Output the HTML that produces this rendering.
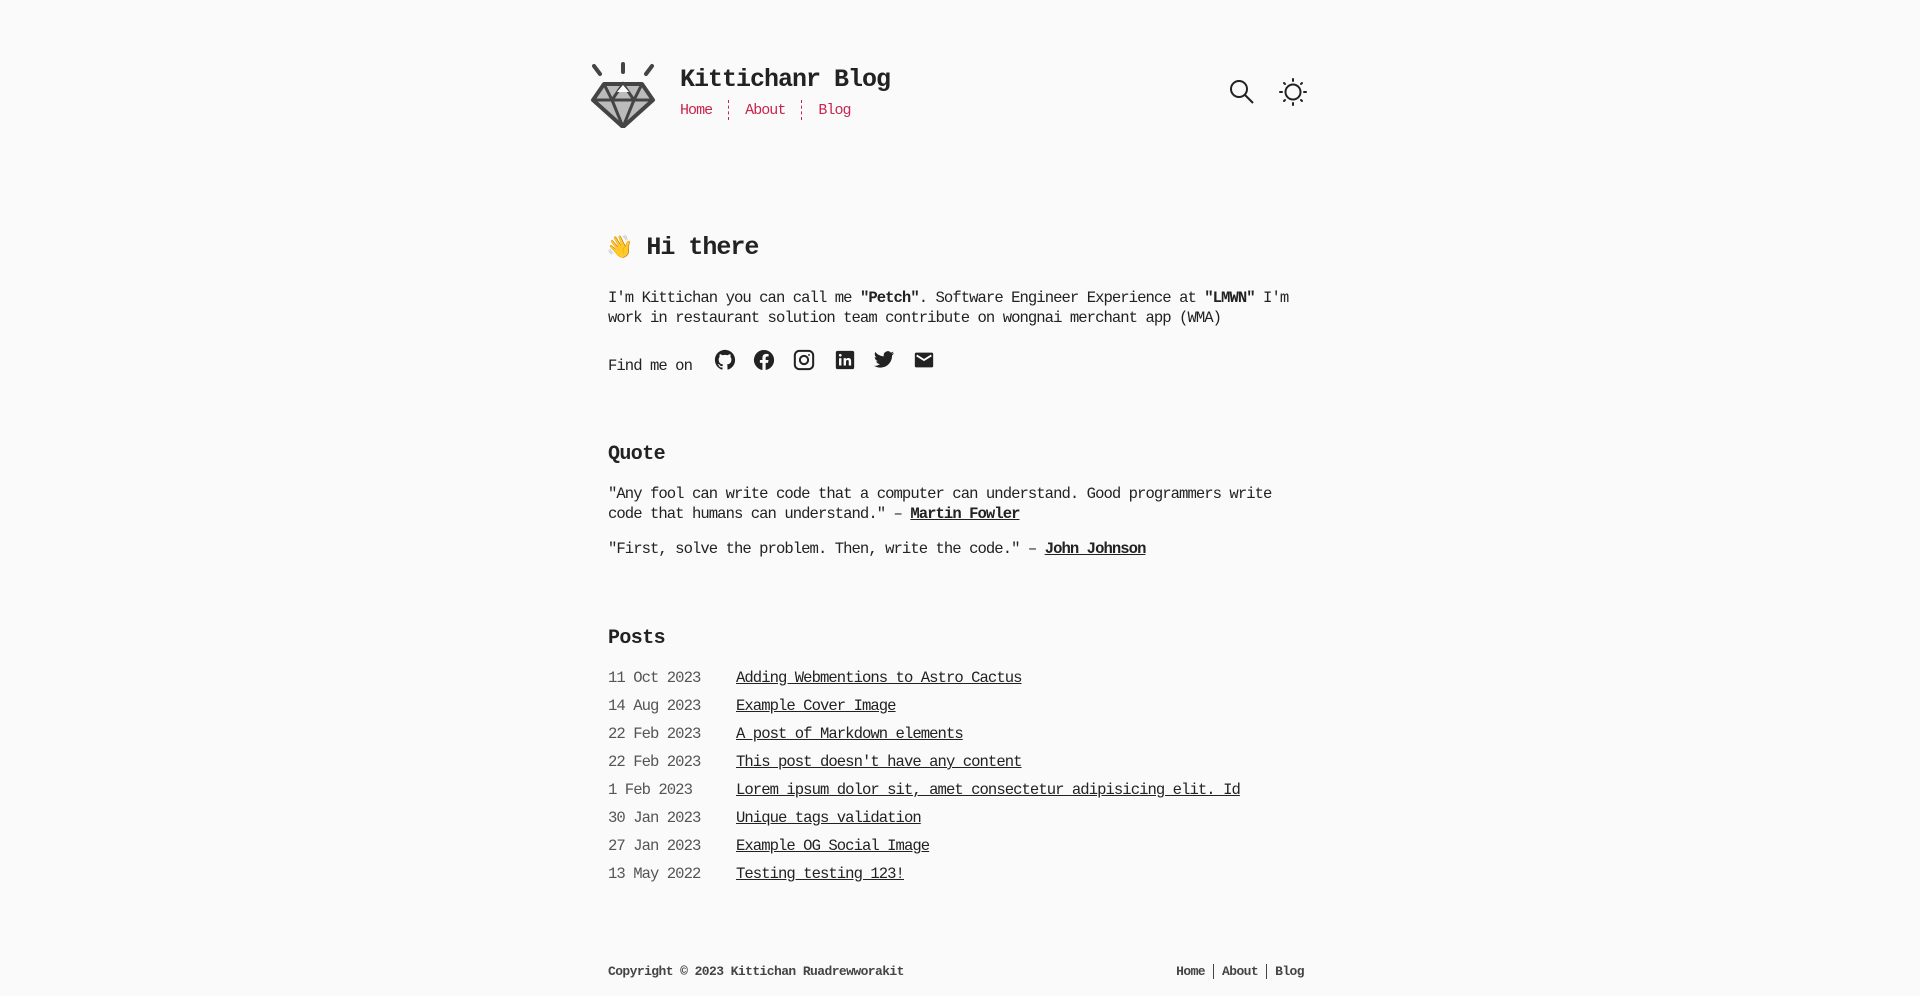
<!DOCTYPE html>
<html><head><meta charset="utf-8"><style>
*{margin:0;padding:0;box-sizing:border-box}
body{background:#fafafa;color:#222;font-family:"Liberation Mono",monospace;font-size:16px;width:1920px;height:996px;position:relative;overflow:hidden;letter-spacing:-0.06em}
.a{position:absolute;white-space:nowrap}
a{color:inherit;text-decoration:underline}
.nav a{color:#c7254e;text-decoration:none;font-size:15px}
.sep{display:inline-block;width:0;height:20px;border-left:1px dashed #c7254e;vertical-align:middle;margin:0 16px}
.row{position:absolute;left:608px;font-size:15.6px;line-height:20px}
.row span{color:#555;display:inline-block;width:128px}
.row a{color:#222}
.foot{font-size:13px;font-weight:bold;color:#444;letter-spacing:-0.045em}
.fn a{text-decoration:none;color:#444;padding:0 8px;border-left:1px solid #444}
.fn a:first-child{border:none}
</style></head><body>
<svg class="a" style="left:590px;top:62px" width="66" height="66" viewBox="0 0 66 66">
<g stroke="#444" stroke-width="4" stroke-linecap="round" fill="none">
<line x1="4" y1="4" x2="10" y2="12"/><line x1="33" y1="2" x2="33" y2="10"/><line x1="62" y1="4" x2="56" y2="12"/></g>
<path d="M14 22 H52 L63 38 L33 65 L3 38 Z" fill="#bbb" stroke="#444" stroke-width="4" stroke-linejoin="round"/>
<path d="M3 38 H63 M14 22 L22 38 L33 22 L44 38 L52 22 M22 38 L33 65 L44 38" fill="none" stroke="#444" stroke-width="3"/>
<path d="M27 30 L33 23 L39 30Z" fill="#fff"/>
</svg>
<div class="a" style="left:680px;top:65px;font-size:25px;font-weight:bold;color:#222;letter-spacing:-0.04em">Kittichanr Blog</div>
<div class="a nav" style="left:680px;top:100px"><a>Home</a><span class="sep"></span><a>About</a><span class="sep"></span><a>Blog</a></div>
<svg class="a" style="left:1228px;top:78px" width="28" height="28" viewBox="0 0 28 28" fill="none" stroke="#222" stroke-width="2"><circle cx="11" cy="11" r="8"/><line x1="17" y1="17" x2="25" y2="25"/></svg>
<svg class="a" style="left:1279px;top:78px" width="28" height="28" viewBox="0 0 28 28" fill="none" stroke="#222" stroke-width="2"><circle cx="14" cy="14" r="7.5"/><g stroke-linecap="round"><line x1="14" y1="1" x2="14" y2="3"/><line x1="14" y1="25" x2="14" y2="27"/><line x1="1" y1="14" x2="3" y2="14"/><line x1="25" y1="14" x2="27" y2="14"/><line x1="5" y1="5" x2="6" y2="6"/><line x1="22" y1="22" x2="23" y2="23"/><line x1="23" y1="5" x2="22" y2="6"/><line x1="5" y1="23" x2="6" y2="22"/></g></svg>
<div class="a" style="left:606px;top:233px;font-size:25px;font-weight:bold;letter-spacing:-0.04em"><span style="font-family:'Noto Color Emoji',sans-serif;font-size:22px">👋</span> Hi there</div>
<div class="a" style="left:608px;top:288px;line-height:20px;font-size:15.6px">I'm Kittichan you can call me <b>"Petch"</b>. Software Engineer Experience at <b>"LMWN"</b> I'm<br>work in restaurant solution team contribute on wongnai merchant app (WMA)</div>
<div class="a" style="left:608px;top:357px;font-size:15.6px">Find me on</div>
<svg class="a" style="left:714px;top:349px" width="22" height="22" viewBox="0 0 24 24" fill="#222"><path d="M12 1C5.9 1 1 5.9 1 12c0 4.9 3.2 9 7.5 10.5.6.1.8-.2.8-.5v-2c-3.1.7-3.7-1.3-3.7-1.3-.5-1.3-1.2-1.6-1.2-1.6-1-.7.1-.7.1-.7 1.1.1 1.700 1.1 1.7 1.1 1 1.7 2.6 1.2 3.2.9.1-.7.4-1.2.7-1.5-2.4-.3-5-1.2-5-5.4 0-1.2.4-2.2 1.1-2.9-.1-.3-.5-1.4.1-2.9 0 0 .9-.3 3 1.1a10 10 0 0 1 5.5 0c2.1-1.4 3-1.1 3-1.1.6 1.5.2 2.6.1 2.9.7.8 1.1 1.700 1.1 2.9 0 4.2-2.6 5.1-5 5.4.4.3.7 1 .7 2v3c0 .3.2.6.8.5C19.800 21 23 16.9 23 12 23 5.9 18.1 1 12 1z"/></svg>
<svg class="a" style="left:753px;top:349px" width="22" height="22" viewBox="0 0 24 24" fill="#222"><path d="M23 12a11 11 0 1 0-12.7 10.9v-7.7H7.5V12h2.8V9.6c0-2.8 1.6-4.3 4.2-4.3 1.2 0 2.5.2 2.5.2v2.7h-1.4c-1.4 0-1.8.9-1.8 1.7V12h3.1l-.5 3.2h-2.6v7.7A11 11 0 0 0 23 12z"/></svg>
<svg class="a" style="left:793px;top:349px" width="22" height="22" viewBox="0 0 24 24" fill="none" stroke="#222" stroke-width="2.2"><rect x="2" y="2" width="20" height="20" rx="5"/><circle cx="12" cy="12" r="4.5"/><circle cx="17.5" cy="6.5" r="1" fill="#222" stroke="none"/></svg>
<svg class="a" style="left:834px;top:349px" width="22" height="22" viewBox="0 0 24 24"><rect x="2" y="2" width="20" height="20" rx="2" fill="#222"/><rect x="5.5" y="10" width="2.6" height="8" fill="#fff"/><circle cx="6.8" cy="6.8" r="1.5" fill="#fff"/><path d="M10.5 10h2.5v1.2c.5-.9 1.5-1.4 2.7-1.4 2 0 3 1.2 3 3.5V18h-2.6v-4.3c0-1.1-.4-1.7-1.3-1.7s-1.7.6-1.7 1.8V18h-2.6z" fill="#fff"/></svg>
<svg class="a" style="left:873px;top:349px" width="22" height="22" viewBox="0 0 24 24" fill="#222"><path d="M23 4.6a9 9 0 0 1-2.6.7 4.5 4.5 0 0 0 2-2.5 9 9 0 0 1-2.9 1.1 4.5 4.5 0 0 0-7.7 4.1A12.8 12.8 0 0 1 2.5 3.3a4.5 4.5 0 0 0 1.4 6 4.5 4.5 0 0 1-2-.6 4.5 4.5 0 0 0 3.6 4.5 4.5 4.5 0 0 1-2 .1 4.5 4.5 0 0 0 4.2 3.1A9 9 0 0 1 1 18.3 12.8 12.8 0 0 0 8 20.3c8.3 0 12.8-6.9 12.8-12.8v-.6A9 9 0 0 0 23 4.6z"/></svg>
<svg class="a" style="left:913px;top:349px" width="22" height="22" viewBox="0 0 24 24"><rect x="2" y="4" width="20" height="16" rx="1.5" fill="#222"/><path d="M4 7l8 5 8-5" fill="none" stroke="#fff" stroke-width="2"/></svg>
<div class="a" style="left:608px;top:443px;font-size:20px;font-weight:bold;letter-spacing:-0.03em">Quote</div>
<div class="a" style="left:608px;top:484px;line-height:20px;font-size:15.6px">"Any fool can write code that a computer can understand. Good programmers write<br>code that humans can understand." – <b><a>Martin Fowler</a></b></div>
<div class="a" style="left:608px;top:540px;font-size:15.6px">"First, solve the problem. Then, write the code." – <b><a>John Johnson</a></b></div>
<div class="a" style="left:608px;top:627px;font-size:20px;font-weight:bold;letter-spacing:-0.03em">Posts</div>
<div class="row" style="top:668px"><span>11 Oct 2023</span><a>Adding Webmentions to Astro Cactus</a></div>
<div class="row" style="top:696px"><span>14 Aug 2023</span><a>Example Cover Image</a></div>
<div class="row" style="top:724px"><span>22 Feb 2023</span><a>A post of Markdown elements</a></div>
<div class="row" style="top:752px"><span>22 Feb 2023</span><a>This post doesn't have any content</a></div>
<div class="row" style="top:780px"><span>1 Feb 2023</span><a>Lorem ipsum dolor sit, amet consectetur adipisicing elit. Id</a></div>
<div class="row" style="top:808px"><span>30 Jan 2023</span><a>Unique tags validation</a></div>
<div class="row" style="top:836px"><span>27 Jan 2023</span><a>Example OG Social Image</a></div>
<div class="row" style="top:864px"><span>13 May 2022</span><a>Testing testing 123!</a></div>
<div class="a foot" style="left:608px;top:964px">Copyright © 2023 Kittichan Ruadrewworakit</div>
<div class="a foot fn" style="right:616px;top:963px;line-height:18px"><a>Home</a><a>About</a><a style="padding-right:0">Blog</a></div>
</body></html>
